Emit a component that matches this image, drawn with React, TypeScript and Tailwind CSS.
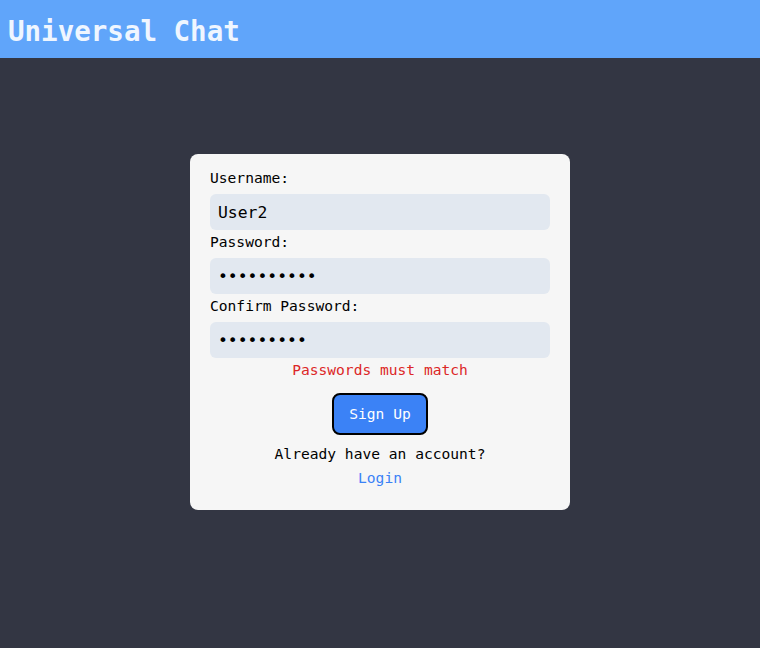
import React from "react";

export default function App() {
  const mono = { fontFamily: '"DejaVu Sans Mono", "Liberation Mono", monospace' };
  return (
    <div className="min-h-[648px] w-full bg-[#333643]" style={mono}>
      <header className="h-[58px] bg-[#60a5fa] flex items-center px-2">
        <h1 className="text-[27.5px] font-bold text-[#eff6ff] leading-none mt-[5px]">Universal Chat</h1>
      </header>
      <div className="flex justify-center pt-[96px]">
        <div className="w-[380px] bg-[#f6f6f6] rounded-lg px-5 pt-3 pb-5 flex flex-col text-[14.6px] text-black">
          <label className="leading-6 mb-1">Username:</label>
          <input
            readOnly
            value="User2"
            className="h-9 w-full rounded-md bg-[#e2e8f0] px-2 text-[16.4px] outline-none"
            style={mono}
          />
          <label className="leading-6 mb-1">Password:</label>
          <input
            readOnly
            type="password"
            value="abcdefghij"
            className="h-9 w-full rounded-md bg-[#e2e8f0] px-2 text-[16.4px] outline-none"
            style={mono}
          />
          <label className="leading-6 mb-1">Confirm Password:</label>
          <input
            readOnly
            type="password"
            value="abcdefghi"
            className="h-9 w-full rounded-md bg-[#e2e8f0] px-2 text-[16.4px] outline-none"
            style={mono}
          />
          <p className="leading-6 text-center text-[#dc2626]">Passwords must match</p>
          <div className="flex justify-center mt-[11px]">
            <button
              className="h-[42px] w-[96px] rounded-lg border-2 border-black bg-[#3b82f6] text-white leading-6 font-medium"
              style={mono}
            >
              Sign Up
            </button>
          </div>
          <p className="leading-6 text-center mt-[7px]">Already have an account?</p>
          <a className="leading-6 text-center text-[#3b82f6] cursor-pointer">Login</a>
        </div>
      </div>
    </div>
  );
}
